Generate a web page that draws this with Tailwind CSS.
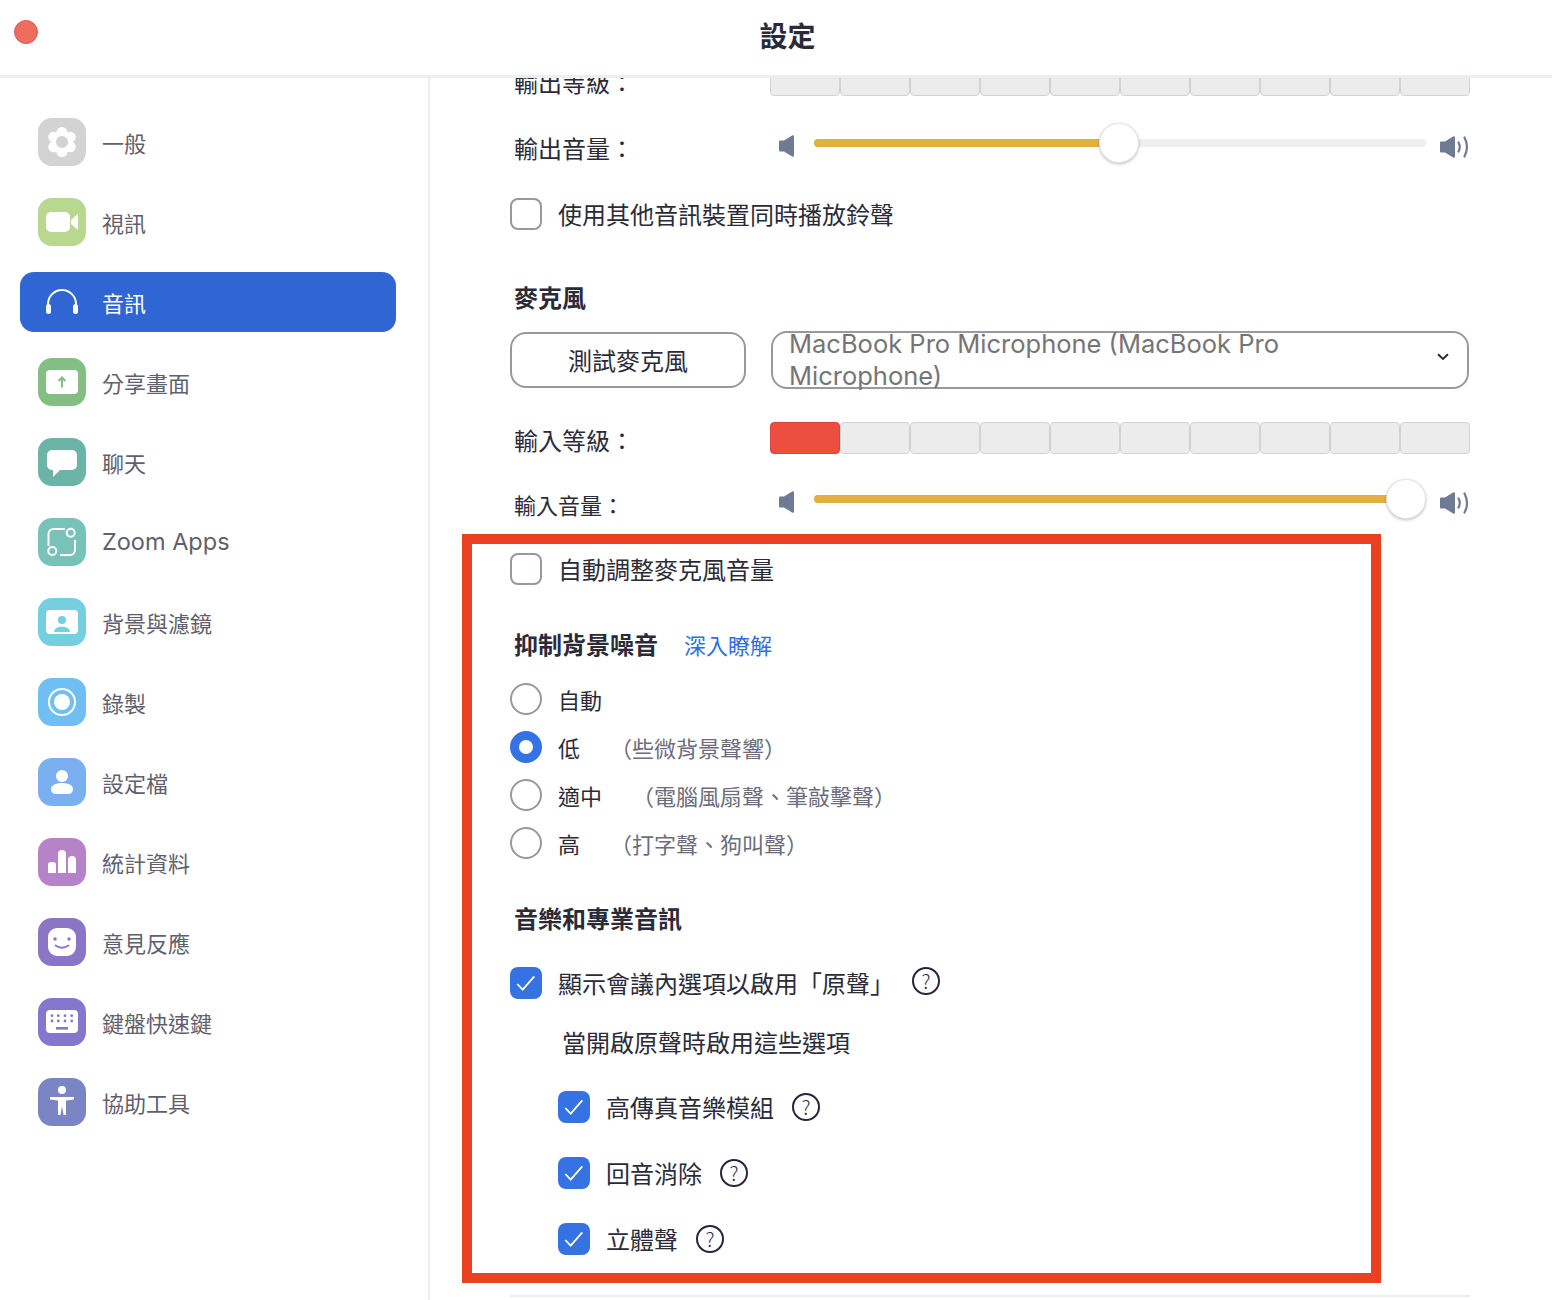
<!DOCTYPE html>
<html lang="zh-Hant">
<head>
<meta charset="UTF-8" />
<title>設定</title>
<script src="https://cdn.jsdelivr.net/npm/@tailwindcss/browser@4"></script>
</head>
<body class="bg-white">
<div class="w-[1552px] h-[1300px] overflow-hidden bg-white text-[#2b2b38] font-['Noto_Sans_CJK_TC','Noto_Sans',sans-serif]">

  <!-- title bar -->
  <header class="relative flex items-center justify-center h-[78px] border-b-[3px] border-[#eeedf2]">
    <span class="absolute left-[14px] top-[20px] w-6 h-6 rounded-full bg-[#ee6d60] border border-[#d95b50]"></span>
    <h1 class="text-[28px] leading-[34px] font-bold ml-[23px] mb-[6px]">設定</h1>
  </header>

  <div class="flex h-[1222px]">
    <!-- sidebar -->
    <aside class="w-[430px] shrink-0 border-r-2 border-[#eeeeee] pt-[34px] flex flex-col gap-5 text-[22px] leading-[30px] text-[#5f5f6e]">
      <a class="flex items-center gap-4 ml-5 w-[376px] h-[60px] pl-[18px]">
        <span class="w-12 h-12 rounded-[14px] bg-[#d3d3d3]">
          <svg viewBox="0 0 48 48" class="w-12 h-12"><g fill="#fff"><circle cx="24" cy="14.5" r="5.5"/><circle cx="24" cy="33.5" r="5.5"/><circle cx="15.8" cy="19.2" r="5.5"/><circle cx="32.2" cy="19.2" r="5.5"/><circle cx="15.8" cy="28.8" r="5.5"/><circle cx="32.2" cy="28.8" r="5.5"/><circle cx="24" cy="24" r="9"/></g><circle cx="24" cy="24" r="6" fill="#d3d3d3"/></svg>
        </span>
        <span>一般</span>
      </a>
      <a class="flex items-center gap-4 ml-5 w-[376px] h-[60px] pl-[18px]">
        <span class="w-12 h-12 rounded-[14px] bg-[#b8d78f]">
          <svg viewBox="0 0 48 48" class="w-12 h-12" fill="#fff"><rect x="8" y="14" width="24" height="20" rx="5"/><path d="M33 22 L40 16 V32 L33 26Z"/></svg>
        </span>
        <span>視訊</span>
      </a>
      <a class="flex items-center gap-4 ml-5 w-[376px] h-[60px] pl-[18px] bg-[#2f66d3] rounded-[14px] text-white">
        <span class="w-12 h-12">
          <svg viewBox="0 0 48 48" class="w-12 h-12" fill="#fff"><path d="M10 32 V26 a14 14 0 0 1 28 0 V32" fill="none" stroke="#fff" stroke-width="2"/><rect x="8" y="26" width="5" height="10" rx="2.5"/><rect x="35" y="26" width="5" height="10" rx="2.5"/></svg>
        </span>
        <span>音訊</span>
      </a>
      <a class="flex items-center gap-4 ml-5 w-[376px] h-[60px] pl-[18px]">
        <span class="w-12 h-12 rounded-[14px] bg-[#83bf82]">
          <svg viewBox="0 0 48 48" class="w-12 h-12"><rect x="8" y="12" width="32" height="24" rx="4" fill="#fff"/><path d="M24 29.5 V19.5 M20.5 23 L24 19.5 L27.5 23" fill="none" stroke="#83bf82" stroke-width="2"/></svg>
        </span>
        <span>分享畫面</span>
      </a>
      <a class="flex items-center gap-4 ml-5 w-[376px] h-[60px] pl-[18px]">
        <span class="w-12 h-12 rounded-[14px] bg-[#6cb3a8]">
          <svg viewBox="0 0 48 48" class="w-12 h-12" fill="#fff"><rect x="9" y="12" width="30" height="20" rx="5"/><path d="M15 30 V39 L23 31Z"/></svg>
        </span>
        <span>聊天</span>
      </a>
      <a class="flex items-center gap-4 ml-5 w-[376px] h-[60px] pl-[18px]">
        <span class="w-12 h-12 rounded-[14px] bg-[#78c2b8]">
          <svg viewBox="0 0 48 48" class="w-12 h-12" fill="none" stroke="#fff" stroke-width="2"><path d="M10.5 28 V16 a5 5 0 0 1 5-5 H27"/><path d="M22 37 H32 a5 5 0 0 0 5-5 V22"/><circle cx="32.7" cy="14.7" r="4"/><circle cx="14.3" cy="33" r="4"/></svg>
        </span>
        <span class="font-['Inter',sans-serif] text-[23.5px]">Zoom Apps</span>
      </a>
      <a class="flex items-center gap-4 ml-5 w-[376px] h-[60px] pl-[18px]">
        <span class="w-12 h-12 rounded-[14px] bg-[#75cfe0]">
          <svg viewBox="0 0 48 48" class="w-12 h-12"><rect x="8" y="12" width="32" height="24" rx="4" fill="#fff"/><circle cx="24" cy="22" r="4" fill="#75cfe0"/><path d="M16 34 a8 5.5 0 0 1 16 0z" fill="#75cfe0"/></svg>
        </span>
        <span>背景與濾鏡</span>
      </a>
      <a class="flex items-center gap-4 ml-5 w-[376px] h-[60px] pl-[18px]">
        <span class="w-12 h-12 rounded-[14px] bg-[#6fbff2]">
          <svg viewBox="0 0 48 48" class="w-12 h-12"><circle cx="24" cy="24" r="13" fill="none" stroke="#fff" stroke-width="2"/><circle cx="24" cy="24" r="8" fill="#fff"/></svg>
        </span>
        <span>錄製</span>
      </a>
      <a class="flex items-center gap-4 ml-5 w-[376px] h-[60px] pl-[18px]">
        <span class="w-12 h-12 rounded-[14px] bg-[#7ab0f0]">
          <svg viewBox="0 0 48 48" class="w-12 h-12" fill="#fff"><circle cx="24" cy="18" r="6"/><path d="M13 31 C13 23 35 23 35 31 C35 34 33 36 30 36 H18 C15 36 13 34 13 31Z"/></svg>
        </span>
        <span>設定檔</span>
      </a>
      <a class="flex items-center gap-4 ml-5 w-[376px] h-[60px] pl-[18px]">
        <span class="w-12 h-12 rounded-[14px] bg-[#b682c8]">
          <svg viewBox="0 0 48 48" class="w-12 h-12" fill="#fff"><path d="M10 35 V27 a3 3 0 0 1 3-3 h2 a3 3 0 0 1 3 3 V35Z"/><path d="M20 35 V16 a4 4 0 0 1 8 0 V35Z"/><path d="M30 35 V22 a4 4 0 0 1 8 0 V35Z"/></svg>
        </span>
        <span>統計資料</span>
      </a>
      <a class="flex items-center gap-4 ml-5 w-[376px] h-[60px] pl-[18px]">
        <span class="w-12 h-12 rounded-[14px] bg-[#8c75c4]">
          <svg viewBox="0 0 48 48" class="w-12 h-12"><rect x="10" y="10" width="28" height="28" rx="9" fill="#fff"/><circle cx="17" cy="21" r="1.7" fill="#8c75c4"/><circle cx="31" cy="21" r="1.7" fill="#8c75c4"/><path d="M17.5 27.5 Q24 32 30.5 27.5" fill="none" stroke="#8c75c4" stroke-width="1.8" stroke-linecap="round"/></svg>
        </span>
        <span>意見反應</span>
      </a>
      <a class="flex items-center gap-4 ml-5 w-[376px] h-[60px] pl-[18px]">
        <span class="w-12 h-12 rounded-[14px] bg-[#8577ce]">
          <svg viewBox="0 0 48 48" class="w-12 h-12"><rect x="8" y="12" width="32" height="23" rx="4" fill="#fff"/><g fill="#8577ce"><circle cx="14" cy="17.7" r="1.4"/><circle cx="20.3" cy="17.7" r="1.4"/><circle cx="27" cy="17.7" r="1.4"/><circle cx="33.7" cy="17.7" r="1.4"/><circle cx="14" cy="23" r="1.4"/><circle cx="20.3" cy="23" r="1.4"/><circle cx="27" cy="23" r="1.4"/><circle cx="33.7" cy="23" r="1.4"/><rect x="18" y="29" width="12" height="2.6"/></g></svg>
        </span>
        <span>鍵盤快速鍵</span>
      </a>
      <a class="flex items-center gap-4 ml-5 w-[376px] h-[60px] pl-[18px]">
        <span class="w-12 h-12 rounded-[14px] bg-[#7b85c4]">
          <svg viewBox="0 0 48 48" class="w-12 h-12" fill="#fff"><circle cx="24" cy="12" r="4"/><path d="M12 19 H36 V21.5 L28 22.5 V37 H25.5 L24 28 L22.5 37 H20 V22.5 L12 21.5Z"/></svg>
        </span>
        <span>協助工具</span>
      </a>
    </aside>

    <!-- audio settings -->
    <main class="relative flex-1 overflow-hidden pl-20 text-[24px] leading-8">
      <div class="w-[960px]">
        <div class="flex items-center mt-[-14px] h-8">
          <span class="w-[260px] pl-1 pt-1">輸出等級：</span>
          <div class="flex w-[700px] h-8">
            <span class="flex-1 bg-[#ececec] border border-[#d2d2d2] rounded-[4px]"></span>
            <span class="flex-1 bg-[#ececec] border border-[#d2d2d2] rounded-[4px]"></span>
            <span class="flex-1 bg-[#ececec] border border-[#d2d2d2] rounded-[4px]"></span>
            <span class="flex-1 bg-[#ececec] border border-[#d2d2d2] rounded-[4px]"></span>
            <span class="flex-1 bg-[#ececec] border border-[#d2d2d2] rounded-[4px]"></span>
            <span class="flex-1 bg-[#ececec] border border-[#d2d2d2] rounded-[4px]"></span>
            <span class="flex-1 bg-[#ececec] border border-[#d2d2d2] rounded-[4px]"></span>
            <span class="flex-1 bg-[#ececec] border border-[#d2d2d2] rounded-[4px]"></span>
            <span class="flex-1 bg-[#ececec] border border-[#d2d2d2] rounded-[4px]"></span>
            <span class="flex-1 bg-[#ececec] border border-[#d2d2d2] rounded-[4px]"></span>
          </div>
        </div>

        <div class="flex items-center mt-[27px] h-10">
          <span class="w-[269px] pl-1 pt-[10px]">輸出音量：</span>
          <svg viewBox="0 0 15 22" class="w-[15px] h-[22px] mt-[6px]" fill="#6f7a93"><path d="M0 6.5 Q0 5.5 1 5.5 H5 L13.5 0.3 Q15 0 15 1.5 V20.5 Q15 22 13.5 21.7 L5 16.5 H1 Q0 16.5 0 15.5Z"/></svg>
          <div class="relative w-[612px] h-2 ml-5 rounded-full bg-[#efefef]">
            <div class="w-[290px] h-2 rounded-full bg-[#e3b13b]"></div>
            <span class="absolute left-[285px] top-[-16px] w-10 h-10 rounded-full bg-white border border-[#e4e4e4] shadow-[0_1px_3px_rgba(0,0,0,0.25)]"></span>
          </div>
          <svg viewBox="0 0 30 22" class="w-[30px] h-[22px] ml-[14px] mt-2" fill="#6f7a93"><path d="M0 6.5 Q0 5.5 1 5.5 H5 L13.5 0.3 Q15 0 15 1.5 V20.5 Q15 22 13.5 21.7 L5 16.5 H1 Q0 16.5 0 15.5Z"/><path d="M18.5 6.5 Q21 11 18.5 15.5 M24.5 1.5 Q29.5 11 24.5 20.5" fill="none" stroke="#6f7a93" stroke-width="2.2" stroke-linecap="round"/></svg>
        </div>

        <label class="flex items-center gap-4 mt-[35px] h-8">
          <span class="w-8 h-8 rounded-lg border-2 border-[#98989e]"></span>
          <span>使用其他音訊裝置同時播放鈴聲</span>
        </label>

        <h2 class="mt-[51px] h-8 pl-1 font-bold">麥克風</h2>

        <div class="flex items-center mt-[18px] h-[58px]">
          <button class="w-[236px] h-[56px] rounded-2xl border-2 border-[#98989e]">測試麥克風</button>
          <div class="flex justify-between w-[698px] h-[58px] ml-[25px] pl-4 pr-[18px] items-center rounded-2xl border-2 border-[#98989e]">
            <span class="font-['Inter',sans-serif] text-[25.5px] text-[#757575]">MacBook Pro Microphone (MacBook Pro Microphone)</span>
            <svg viewBox="0 0 12 8" class="w-3 h-2 mb-[7px]" fill="none" stroke="#2b2b38" stroke-width="2"><path d="M1 1.2 L6 6 L11 1.2"/></svg>
          </div>
        </div>

        <div class="flex items-center mt-[33px] h-8">
          <span class="w-[260px] pl-1 pt-1">輸入等級：</span>
          <div class="flex w-[700px] h-8">
            <span class="flex-1 bg-[#ec4f3e] border border-[#d9473a] rounded-[4px]"></span>
            <span class="flex-1 bg-[#ececec] border border-[#d2d2d2] rounded-[4px]"></span>
            <span class="flex-1 bg-[#ececec] border border-[#d2d2d2] rounded-[4px]"></span>
            <span class="flex-1 bg-[#ececec] border border-[#d2d2d2] rounded-[4px]"></span>
            <span class="flex-1 bg-[#ececec] border border-[#d2d2d2] rounded-[4px]"></span>
            <span class="flex-1 bg-[#ececec] border border-[#d2d2d2] rounded-[4px]"></span>
            <span class="flex-1 bg-[#ececec] border border-[#d2d2d2] rounded-[4px]"></span>
            <span class="flex-1 bg-[#ececec] border border-[#d2d2d2] rounded-[4px]"></span>
            <span class="flex-1 bg-[#ececec] border border-[#d2d2d2] rounded-[4px]"></span>
            <span class="flex-1 bg-[#ececec] border border-[#d2d2d2] rounded-[4px]"></span>
          </div>
        </div>

        <div class="flex items-center mt-[25px] h-10">
          <span class="w-[269px] pl-1 pt-[10px] text-[22px]">輸入音量：</span>
          <svg viewBox="0 0 15 22" class="w-[15px] h-[22px] mt-[6px]" fill="#6f7a93"><path d="M0 6.5 Q0 5.5 1 5.5 H5 L13.5 0.3 Q15 0 15 1.5 V20.5 Q15 22 13.5 21.7 L5 16.5 H1 Q0 16.5 0 15.5Z"/></svg>
          <div class="relative w-[612px] h-2 ml-5 rounded-full bg-[#efefef]">
            <div class="w-[580px] h-2 rounded-full bg-[#e3b13b]"></div>
            <span class="absolute left-[572px] top-[-16px] w-10 h-10 rounded-full bg-white border border-[#e4e4e4] shadow-[0_1px_3px_rgba(0,0,0,0.25)]"></span>
          </div>
          <svg viewBox="0 0 30 22" class="w-[30px] h-[22px] ml-[14px] mt-2" fill="#6f7a93"><path d="M0 6.5 Q0 5.5 1 5.5 H5 L13.5 0.3 Q15 0 15 1.5 V20.5 Q15 22 13.5 21.7 L5 16.5 H1 Q0 16.5 0 15.5Z"/><path d="M18.5 6.5 Q21 11 18.5 15.5 M24.5 1.5 Q29.5 11 24.5 20.5" fill="none" stroke="#6f7a93" stroke-width="2.2" stroke-linecap="round"/></svg>
        </div>

        <label class="flex items-center gap-4 mt-[34px] h-8">
          <span class="w-8 h-8 rounded-lg border-2 border-[#98989e]"></span>
          <span>自動調整麥克風音量</span>
        </label>

        <div class="flex items-center mt-[43px] h-8 pl-1">
          <h2 class="font-bold">抑制背景噪音</h2>
          <a class="ml-[26px] text-[22px] text-[#2f6fe0]">深入瞭解</a>
        </div>

        <div class="flex flex-col gap-4 mt-[23px] text-[22px]">
          <label class="flex items-center gap-4 h-8">
            <span class="w-8 h-8 rounded-full border-2 border-[#98989e]"></span>
            <span>自動</span>
          </label>
          <label class="flex items-center gap-4 h-8">
            <span class="w-8 h-8 rounded-full border-[9px] border-[#3572e4] bg-white"></span>
            <span>低</span>
            <span class="ml-[14px] text-[#6c6c7c]">（些微背景聲響）</span>
          </label>
          <label class="flex items-center gap-4 h-8">
            <span class="w-8 h-8 rounded-full border-2 border-[#98989e]"></span>
            <span>適中</span>
            <span class="ml-[14px] text-[#6c6c7c]">（電腦風扇聲、筆敲擊聲）</span>
          </label>
          <label class="flex items-center gap-4 h-8">
            <span class="w-8 h-8 rounded-full border-2 border-[#98989e]"></span>
            <span>高</span>
            <span class="ml-[14px] text-[#6c6c7c]">（打字聲、狗叫聲）</span>
          </label>
        </div>

        <h2 class="mt-[43px] h-8 pl-1 font-bold">音樂和專業音訊</h2>

        <label class="flex items-center gap-4 mt-[33px] h-8">
          <span class="w-8 h-8 rounded-lg bg-[#3572e4]"><svg viewBox="0 0 32 32" class="w-8 h-8" fill="none" stroke="#fff" stroke-width="1.8"><path d="M7.3 17 L12.7 22.7 L24.3 9.3"/></svg></span>
          <span>顯示會議內選項以啟用「原聲」</span>
          <span class="flex items-center justify-center w-7 h-7 ml-[2px] mb-1 rounded-full border-2 border-[#26263a] text-[20px] leading-none font-light">?</span>
        </label>

        <p class="mt-[27px] h-8 pl-[52px]">當開啟原聲時啟用這些選項</p>

        <label class="flex items-center gap-4 mt-[33px] h-8 pl-12">
          <span class="w-8 h-8 rounded-lg bg-[#3572e4]"><svg viewBox="0 0 32 32" class="w-8 h-8" fill="none" stroke="#fff" stroke-width="1.8"><path d="M7.3 17 L12.7 22.7 L24.3 9.3"/></svg></span>
          <span>高傳真音樂模組</span>
          <span class="flex items-center justify-center w-7 h-7 ml-[2px] rounded-full border-2 border-[#26263a] text-[20px] leading-none font-light">?</span>
        </label>
        <label class="flex items-center gap-4 mt-[34px] h-8 pl-12">
          <span class="w-8 h-8 rounded-lg bg-[#3572e4]"><svg viewBox="0 0 32 32" class="w-8 h-8" fill="none" stroke="#fff" stroke-width="1.8"><path d="M7.3 17 L12.7 22.7 L24.3 9.3"/></svg></span>
          <span>回音消除</span>
          <span class="flex items-center justify-center w-7 h-7 ml-[2px] rounded-full border-2 border-[#26263a] text-[20px] leading-none font-light">?</span>
        </label>
        <label class="flex items-center gap-4 mt-[34px] h-8 pl-12">
          <span class="w-8 h-8 rounded-lg bg-[#3572e4]"><svg viewBox="0 0 32 32" class="w-8 h-8" fill="none" stroke="#fff" stroke-width="1.8"><path d="M7.3 17 L12.7 22.7 L24.3 9.3"/></svg></span>
          <span>立體聲</span>
          <span class="flex items-center justify-center w-7 h-7 ml-[2px] rounded-full border-2 border-[#26263a] text-[20px] leading-none font-light">?</span>
        </label>

        <div class="mt-10 h-[2px] bg-[#eeedf2]"></div>
      </div>

      <!-- highlight annotation -->
      <div class="absolute left-8 top-[456px] w-[919px] h-[749px] border-[10px] border-[#ec4024]"></div>
    </main>
  </div>
</div>
</body>
</html>
